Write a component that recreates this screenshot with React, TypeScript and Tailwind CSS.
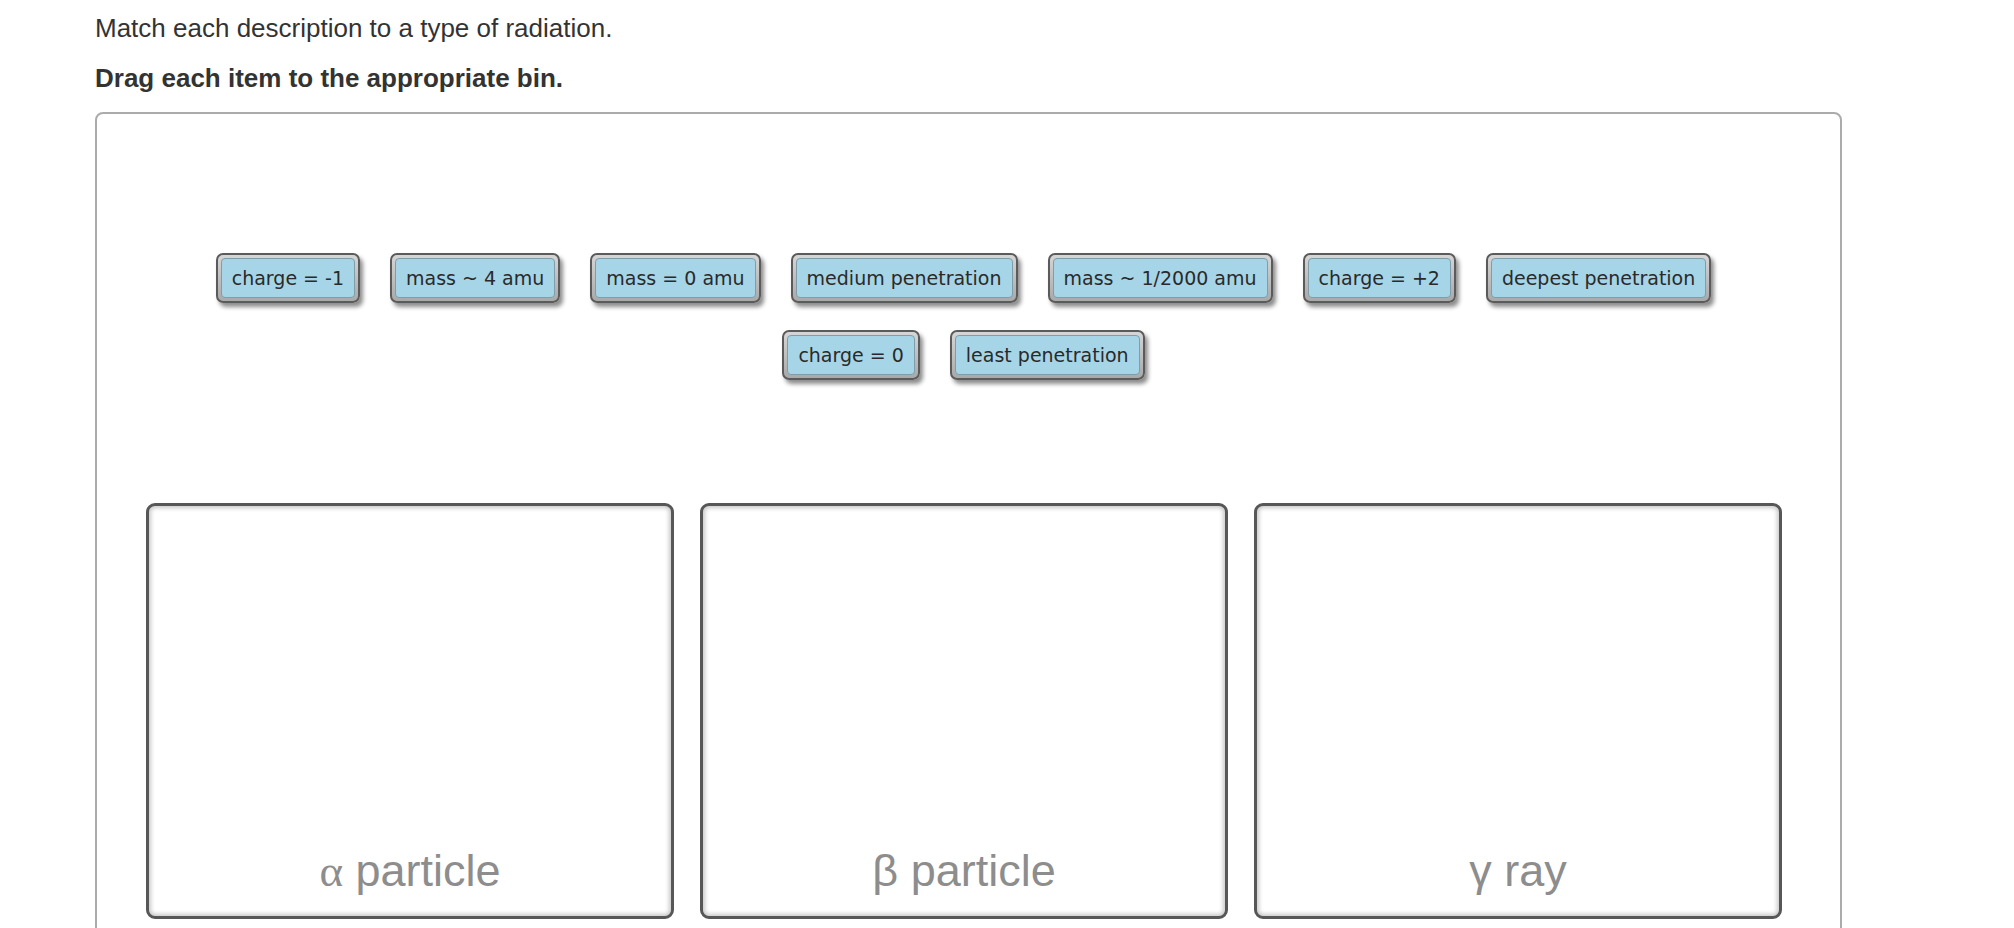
const rowOne = [
  "charge = -1",
  "mass ~ 4 amu",
  "mass = 0 amu",
  "medium penetration",
  "mass ~ 1/2000 amu",
  "charge = +2",
  "deepest penetration",
];

const rowTwo = ["charge = 0", "least penetration"];

const bins = [
  { symbol: "α", label: "particle", serif: true },
  { symbol: "β", label: "particle", serif: false },
  { symbol: "γ", label: "ray", serif: false },
];

const Chip = ({ text }: { text: string }) => (
  <div className="rounded-[7px] border-2 border-[#5b5b5b] bg-gradient-to-b from-[#d6d6d6] to-[#a9a9a9] p-[3px] shadow-[3px_4px_4px_rgba(0,0,0,0.45)]">
    <div className="rounded-[4px] border border-[#7f9ea9] bg-[#a6d5e7] px-[10px] font-['DejaVu_Sans',Verdana,sans-serif] text-[19px] leading-[38px] whitespace-nowrap text-[#2a2a2a]">
      {text}
    </div>
  </div>
);

const App = () => {
  return (
    <div className="min-h-screen bg-white pl-[95px] font-['Liberation_Sans',Arial,sans-serif]">
      <p className="pt-[12px] text-[26px] leading-[32px] text-[#333]">
        Match each description to a type of radiation.
      </p>
      <p className="mt-[18px] text-[26px] leading-[32px] font-bold text-[#333]">
        Drag each item to the appropriate bin.
      </p>

      <div className="mt-[18px] h-[860px] w-[1747px] rounded-[8px] border-2 border-[#ababab]">
        {/* draggable items */}
        <div className="flex flex-col gap-[27px] pt-[139px] pr-[10px]">
          <div className="flex justify-center gap-[30px]">
            {rowOne.map((t) => (
              <Chip key={t} text={t} />
            ))}
          </div>
          <div className="flex justify-center gap-[30px]">
            {rowTwo.map((t) => (
              <Chip key={t} text={t} />
            ))}
          </div>
        </div>

        {/* bins */}
        <div className="mt-[123px] flex gap-[26px] pl-[49px]">
          {bins.map((b) => (
            <div
              key={b.symbol}
              className="flex h-[416px] w-[528px] flex-col items-center justify-end rounded-[9px] border-[3px] border-[#575757] pb-[19px] shadow-[inset_0_0_4px_2px_rgba(0,0,0,0.22)]"
            >
              <span className="text-[45px] leading-[52px] text-[#8d8d8d]">
                <span className={b.serif ? "font-['Liberation_Serif',serif]" : ""}>{b.symbol}</span> {b.label}
              </span>
            </div>
          ))}
        </div>
      </div>
    </div>
  );
};

export default App;
